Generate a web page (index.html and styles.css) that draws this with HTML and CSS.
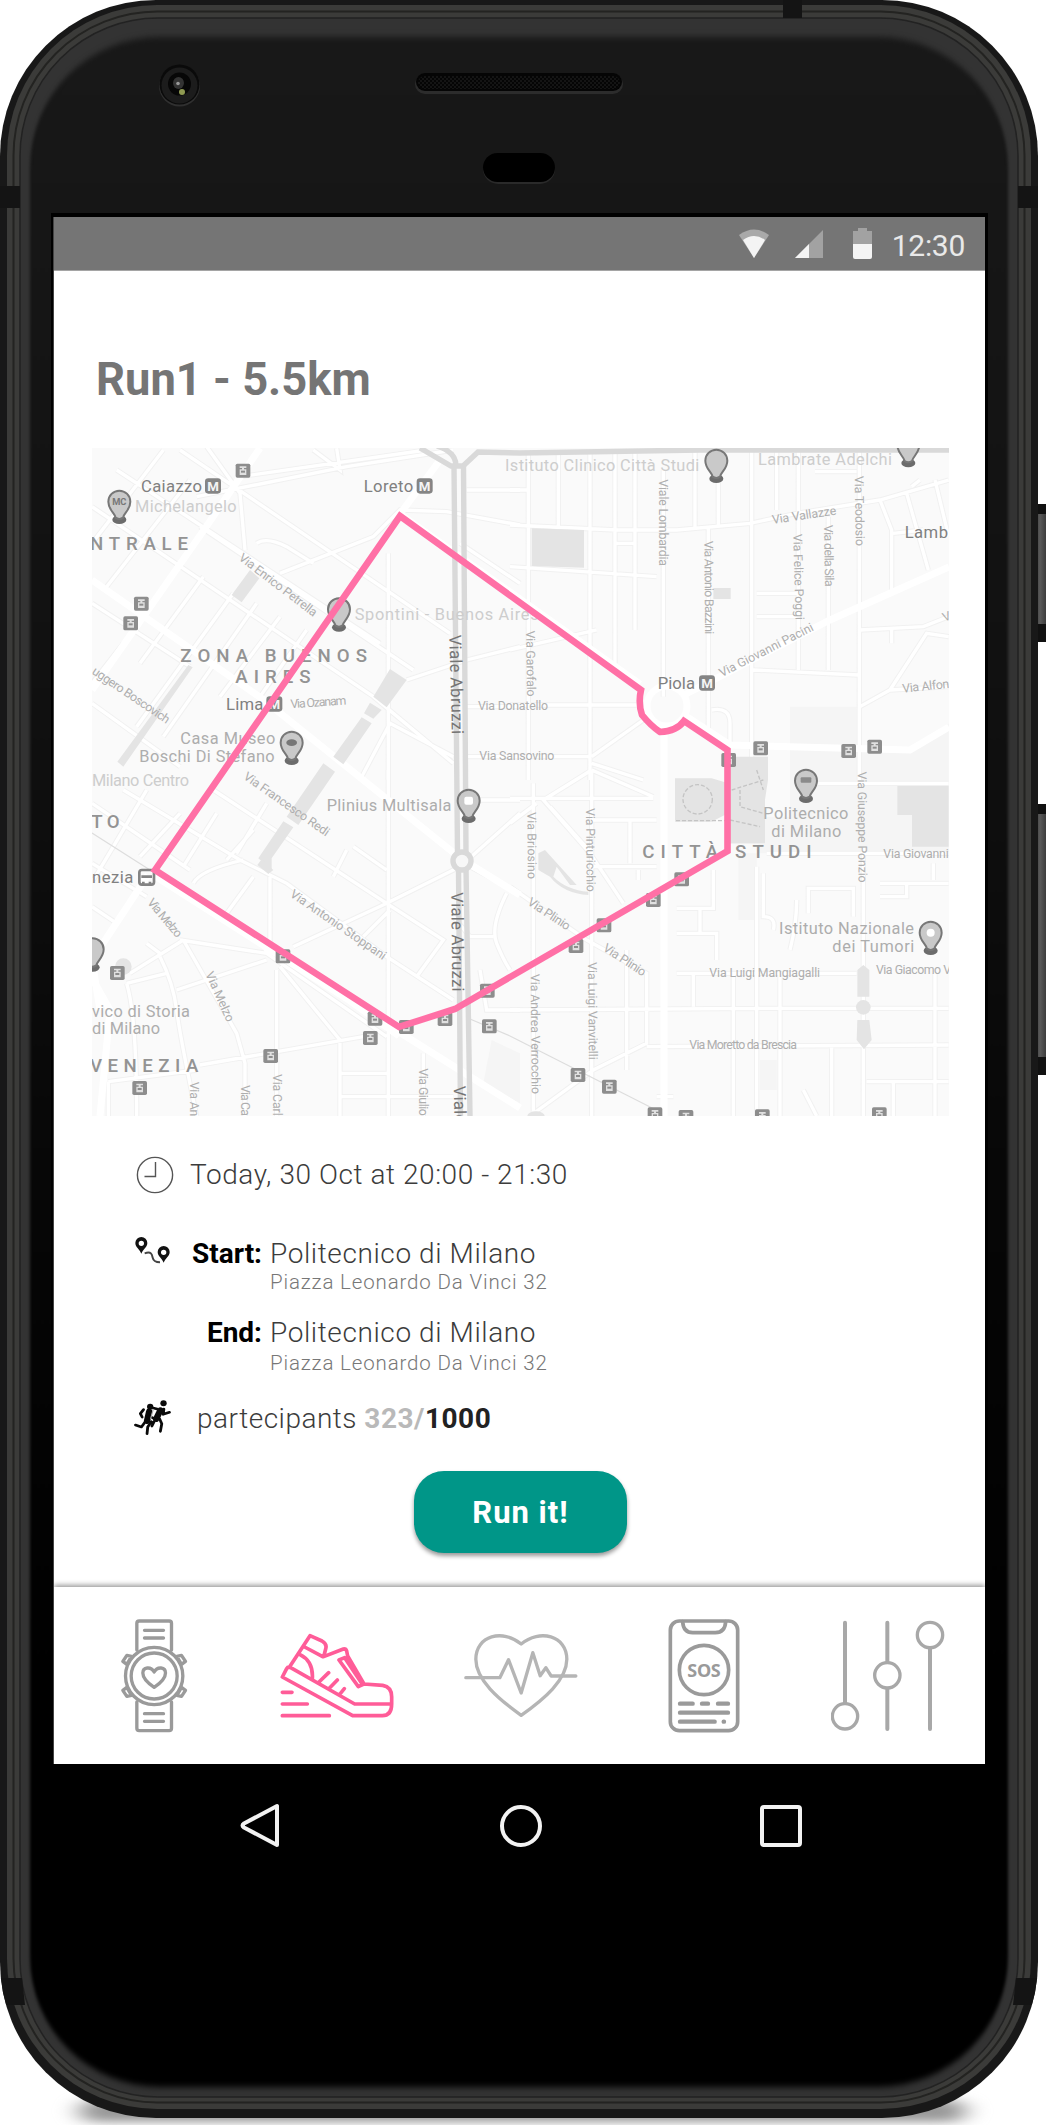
FILE: index.html
```html
<!DOCTYPE html>
<html lang="en">
<head>
<meta charset="utf-8">
<title>Run1 - 5.5km</title>
<link rel="stylesheet" href="styles.css">
</head>
<body>
<div class="phone">
  <svg class="bezel" viewBox="0 0 1046 2125" aria-hidden="true">
    <defs>
      <linearGradient id="glass" x1="0" y1="0" x2="0" y2="1"><stop offset="0" stop-color="#181818"/><stop offset=".3" stop-color="#111"/><stop offset=".6" stop-color="#050505"/><stop offset=".8" stop-color="#000"/></linearGradient>
      <linearGradient id="key" x1="0" y1="0" x2="1" y2="0"><stop offset="0" stop-color="#222"/><stop offset=".5" stop-color="#5a5a5a"/><stop offset="1" stop-color="#333"/></linearGradient>
      <pattern id="mesh" width="4" height="4" patternUnits="userSpaceOnUse"><rect width="4" height="4" fill="#050505"/><circle cx="1" cy="1" r=".8" fill="#262626"/><circle cx="3" cy="3" r=".8" fill="#262626"/></pattern>
      <filter id="soft" x="-5%" y="-5%" width="110%" height="110%" color-interpolation-filters="sRGB"><feGaussianBlur stdDeviation="1.5 3"/></filter>
      <filter id="ground" x="-10%" y="-200%" width="120%" height="500%" color-interpolation-filters="sRGB"><feGaussianBlur stdDeviation="12 5"/></filter>
      <clipPath id="body"><rect width="1038" height="2118" rx="156"/></clipPath>
    </defs>
    <rect x="80" y="2100" width="885" height="22" rx="11" fill="#999" filter="url(#ground)"/>
    <g fill="url(#key)" stroke="#111" stroke-width="2">
      <rect x="1032" y="505" width="16" height="136" rx="3"/>
      <rect x="1032" y="805" width="16" height="269" rx="3"/>
    </g>
    <path fill="#111" d="M1038 506h8v8h-8zM1038 624h8v17h-8zM1038 806h8v8h-8zM1038 1057h8v17h-8z"/>
    <rect width="1038" height="2118" rx="156" fill="#181818"/>
    <rect x="7" y="5" width="1024" height="2104" rx="150" fill="#3b3b39"/>
    <rect x="13.500" y="11.500" width="1011" height="2091" rx="144" fill="none" stroke="#232321" stroke-width="2"/>
    <rect x="20" y="18" width="998" height="2079" rx="138" fill="#333" stroke="#222" stroke-width="1.500"/>
    <rect x="30" y="37" width="978" height="2050" rx="130" fill="url(#glass)" filter="url(#soft)"/>
    <path clip-path="url(#body)" fill="#141414" d="M783 0h19v18h-19zM0 186h20v22h-20zM1018 186h20v22h-20zM0 1978h22l3 27H0zM1038 1978h-22l-3 27h25z"/>
    <circle cx="179.500" cy="86" r="20.500" fill="#303030"/>
    <circle cx="179.500" cy="84.500" r="20" fill="#0a0a0a"/>
    <circle cx="179.500" cy="85.500" r="18" fill="#1c1c1c"/>
    <circle cx="179.500" cy="84" r="11.500" fill="#070707"/>
    <ellipse cx="178.500" cy="83" rx="5.500" ry="6" fill="#333"/><circle cx="178" cy="83.500" r="1.800" fill="#999"/>
    <circle cx="182" cy="92" r="3" fill="#8f9a52"/>
    <rect x="415" y="74" width="208" height="20" rx="10" fill="#2c2c2c"/>
    <rect x="416" y="73" width="206" height="18" rx="9" fill="#050505"/>
    <rect x="418" y="76" width="202" height="13" rx="6.500" fill="url(#mesh)"/>
    <rect x="483" y="154" width="72" height="30" rx="15" fill="#2a2a2a"/>
    <rect x="483" y="153" width="72" height="29" rx="14.500" fill="#000"/>
    <rect x="51" y="213" width="937" height="1560" fill="#000"/>
  </svg>

  <main class="screen">
    <header class="status">
      <svg width="30" height="30" viewBox="0 0 30 30"><path fill="#a9a9a9" d="M0 6Q15-5 30 6L15 29z"/><path fill="#f4f4f4" d="M4 11Q15 3 26 11L15 29z"/></svg>
      <svg width="28" height="30" viewBox="0 0 28 30"><path fill="#a2a2a2" d="M28 1v28H0z"/><path fill="#f4f4f4" d="M14 15v14H0z"/></svg>
      <svg width="19" height="32" viewBox="0 0 19 32"><path fill="#a2a2a2" d="M5 0h9v3h5v14H0V3h5z"/><path fill="#f4f4f4" d="M0 16h19v13q0 2-2 2H2q-2 0-2-2z"/></svg>
      <span class="clock">12:30</span>
    </header>

    <h1 class="title">Run1 - 5.5km</h1>

    <svg class="map" viewBox="92 448 857 668" role="img" aria-label="Route map">
      <defs>
        <g id="tram"><rect x="-22" y="-21" width="44" height="42" rx="5" fill="#8d8d8d"/><path fill="#e0e0e0" d="M-10-13h20v5H3v4h7v17h-20V-4h7v-4h-7z"/><path fill="#8d8d8d" d="M-6 0h12v6H-6z"/></g>
        <g id="metro"><rect x="-24" y="-23" width="48" height="46" rx="10" fill="#858585"/><text class="m" y="14" text-anchor="middle">M</text></g>
        <g id="pin"><ellipse cy="54" rx="21" ry="13" fill="#6c6c6c"/><path fill="#c9c9c9" stroke="#777" stroke-width="6" d="M-11 48C-14 34-33 24-33 0a33 33 0 0 1 66 0C33 24 14 34 11 48Q0 56-11 48z"/></g>
        <path id="nw" d="M300 60L1110 610M110 120L900 640M700 60L780 120L770 55M36 230L880 800L1120 1000M36 520L330 710M380 50L480 190L495 360M250 60L36 340M330 150L80 470M360 290L1000 720M130 640L36 760M460 490L170 890M530 520L250 920M370 440L180 700M600 560L420 800M680 600L540 800M36 820L300 1010M350 200L800 110L1120 60M480 140L1040 60M925 370V1050M530 340Q560 320 620 350L700 400M600 430L880 320L960 240L1100 245L1320 285M1160 180H1320M980 750L1160 690L1320 650M1160 830H1320M1160 980H1320M1140 340L1320 460M840 1050L930 880L1120 980"/>
        <path id="ne" d="M55 60V1050M145 60V290M240 60V1050M315 60V700M375 60V600M460 120V800M555 60V290M625 150V290M595 290V900M725 60V1050M800 60V240M865 60V720M955 260V720M1048 60V1050M0 180H55M0 285L320 300L500 300L720 280L860 250L1110 210L1316 150M0 410L440 440M740 490H860M740 560H860M730 720L1045 735M915 125H1040M1050 600L1240 590L1316 560M1050 830L1140 780L1316 770M1140 780L1250 610L1316 620M1110 210L1145 300V490M1190 190L1255 420M1275 150L1316 320M1150 310L1240 300M0 825H380M0 980H150M140 980H245M0 660L260 600M245 980L400 870M245 1000L400 1050M605 840Q660 830 660 880V940M320 340H375V360M1145 600V640M1205 170L1230 150"/>
        <path id="sw" d="M36 100L330 300M130 60L480 270L620 340L920 560L1120 690M400 60L920 400M36 280L200 380M36 410L110 460M200 60L100 230L40 330M300 130L180 260M410 130L310 290M520 180L440 270M560 100L470 250M340 340Q360 300 490 270M570 320V560M925 0V1038M800 240L760 320M820 230L920 300M920 400L1140 290L1320 130M640 530L920 400L1090 510L1010 620M1170 290L1320 370M1280 370Q1230 470 1250 520T1290 600M1170 500H1240M1160 90H1320M300 510L560 550L920 800M310 510L470 790L495 880V1038M240 560Q280 640 290 720T350 1038M150 610L310 510M140 640L260 610M290 660L560 570M600 590L780 810V1038M360 885L850 800M85 935L350 900M85 935V1038M140 640Q170 740 170 1038M590 600V1038M780 910H920M780 980H920M920 980H1120M1030 850V1038M1200 600L1220 720H1320M200 520L240 550M440 430L520 320M850 500L930 420M1120 440L1170 500"/>
        <path id="se" d="M70 40V1038M0 85H430M245 0L100 90L240 250L340 400M245 0L430 80M120 110L245 250M245 0V1038M0 160L80 100M360 150V280M250 150H440M250 290H440M385 300V330M0 350L230 510L410 610V820L250 900L60 1038M0 720L740 715H1316M500 610H1040M550 610V710M670 610V1038M740 290V1038M810 610V1038M410 830L1316 825M1275 610V1038M1060 230V1038M1070 935H1316M965 830V1038M1150 940V1038M500 490H620V570M500 415H610V300M570 420V490M760 310V440Q800 440 790 480M840 540Q860 460 860 390M895 430V355H1030V440M1110 340H1316M1110 380H1190V340M1270 280V330M770 250H1316M900 40H1316M350 540V900M440 980H490M880 960L920 1038"/>
      </defs>
      <rect x="92" y="448" width="857" height="668" fill="#fafafa"/>
      <g class="park back">
        <g transform="translate(510 430) scale(.33333)"><path d="M840 830H1040V950H1210L1316 880V1270H745V1160H840z"/></g>
        <g transform="translate(80 770) scale(.33333)"><path d="M1235 810L1320 850V1000L1210 940z"/></g>
        <g transform="translate(510 770) scale(.33333)"><path d="M685 250H740V450H685zM750 870H800V960H750z"/></g>
      </g>
      <g class="roads casing">
        <use href="#nw" transform="translate(80 430) scale(.33333)"/><use href="#ne" transform="translate(510 430) scale(.33333)"/><use href="#sw" transform="translate(80 770) scale(.33333)"/><use href="#se" transform="translate(510 770) scale(.33333)"/>
      </g>
      <g class="roads surface">
        <use href="#nw" transform="translate(80 430) scale(.33333)"/><use href="#ne" transform="translate(510 430) scale(.33333)"/><use href="#sw" transform="translate(80 770) scale(.33333)"/><use href="#se" transform="translate(510 770) scale(.33333)"/>
      </g>
      <g class="avenue">
        <path d="M92 580L264 700L460 858L520 895M260 448L206 527L92 690M440 460L400 514L640 684M684 715L730 745L910 750L949 727M684 695L830 620L949 567M664 730V1116M148 875L92 960L100 1010M155 876L399 1032L520 1108M265 948L300 965L399 1036M92 978L110 1010L100 1116"/>
        <circle cx="667" cy="706" r="20"/>
      </g>
      <g class="park">
        <g transform="translate(80 430) scale(.33333)"><path d="M510 420L538 445L485 517L455 495zM325 705L338 712L130 1010L112 995zM930 717L980 750L920 832L880 800zM870 818L905 840L880 866L852 850zM845 862L875 880L790 1003L760 980zM730 1000L765 1025L655 1185L620 1160zM640 1192L610 1174L535 1285L575 1320L575 1285z"/></g>
        <g transform="translate(510 430) scale(.33333)"><path d="M65 295L222 300V413L65 408zM610 474H662V507H610z"/><path d="M660 980H774V1050L745 1240H660z"/></g>
        <g transform="translate(80 770) scale(.33333)"><path d="M545 268L580 300L565 312L532 285z"/><circle cx="130" cy="590" r="25"/></g>
        <g transform="translate(510 770) scale(.33333)"><path d="M495 25H605L650 38V132L605 155H495zM660 0H765V220H660zM1162 48H1316V230H1206V135H1162zM85 250L105 240L200 345H180L140 290L130 320Q170 360 235 365V375Q160 370 120 320L85 300zM1042 600L1060 585L1078 600V680H1042zM1042 750H1078L1085 810L1062 838L1040 810z"/><circle cx="1060" cy="712" r="22"/><ellipse cx="78" cy="1038" rx="26" ry="14"/></g>
      </g>
      <path class="rail" d="M92 833L150 870M470 1019L510 1036L660 1112"/>
      <g transform="translate(510 770) scale(.33333)" class="paths"><circle cx="563" cy="88" r="44"/><path d="M498 152H650M665 60L760 30M660 150L750 170M690 60V110L760 130M740 0L760 60"/></g>
      <g class="trunk">
        <path d="M420 448L451 466H463L478 452L520 453L700 450H949M437 446Q456 452 456 466"/>
        <path d="M454 465L457.500 854M463.500 465L466 854M458.500 868L460.500 1116M466 868L470 1116"/>
        <circle cx="462" cy="861" r="9" fill="#f7f7f7"/>
      </g>

      <g transform="translate(80 430) scale(.33333)">
        <use href="#pin" x="118" y="215"/><text class="tiny" x="97" y="225" textLength="42">MC</text>
        <use href="#pin" x="777" y="538"/><use href="#pin" x="635" y="938"/><ellipse cx="635" cy="938" rx="16" ry="10" fill="#777"/>
        <use href="#tram" x="489" y="122"/><use href="#tram" x="184" y="521"/><use href="#tram" x="152" y="580"/>
        <use href="#metro" x="399" y="168"/><use href="#metro" x="1034" y="168"/><use href="#metro" x="583" y="822"/>
        <g class="stop"><text x="183" y="186" textLength="183">Caiazzo</text><text x="851" y="186" textLength="149">Loreto</text><text x="438" y="839" textLength="112">Lima</text></g>
        <g class="place"><text class="faint" x="165" y="246" textLength="305">Michelangelo</text><text class="faint" x="824" y="571" textLength="552">Spontini - Buenos Aires</text><text x="301" y="943" textLength="285">Casa Museo</text><text x="178" y="995" textLength="406">Boschi Di Stefano</text><text class="faint" x="36" y="1067" textLength="291">Milano Centro</text></g>
        <g class="zone"><text x="30" y="360" textLength="294">NTRALE</text><text x="301" y="697" textLength="560">ZONA BUENOS</text><text x="466" y="758" textLength="226">AIRES</text></g>
        <g class="street"><text transform="translate(474 388) rotate(37.500)" textLength="285">Via Enrico Petrella</text><text transform="translate(34 730) rotate(34)" textLength="272">uggero Boscovich</text><text transform="translate(632 835) rotate(-4)" textLength="168">Via Ozanam</text><text x="1194" y="840" textLength="210">Via Donatello</text><text x="1198" y="990" textLength="225">Via Sansovino</text></g>
        <g class="major"><text transform="translate(1108 615) rotate(88.500)" textLength="298">Viale Abruzzi</text></g>
      </g>
      <g transform="translate(510 430) scale(.33333)">
        <use href="#pin" x="619" y="92"/><use href="#pin" x="1195" y="45"/>
        <use href="#tram" x="752" y="955"/><use href="#tram" x="1016" y="963"/><use href="#tram" x="1094" y="950"/><use href="#tram" x="656" y="990"/><use href="#metro" x="591" y="759"/>
        <g class="stop"><text x="443" y="776" textLength="112">Piola</text><text x="1184" y="325" textLength="130">Lamb</text></g>
        <g class="place faint"><text x="-15" y="122" textLength="583">Istituto Clinico Città Studi</text><text x="744" y="104" textLength="402">Lambrate Adelchi</text></g>
        <g class="street"><text transform="translate(446 148) rotate(90)" textLength="260">Viale Lombardia</text><text transform="translate(583 333) rotate(89.500)" textLength="280">Via Antonio Bazzini</text><text transform="translate(850 312) rotate(88.500)" textLength="258">Via Felice Poggi</text><text transform="translate(942 285) rotate(89)" textLength="185">Via della Sila</text><text transform="translate(1034 138) rotate(89)" textLength="210">Via Teodosio</text><text transform="translate(48 602) rotate(89)" textLength="198">Via Garofalo</text><text transform="translate(788 282) rotate(-8.500)" textLength="194">Via Vallazze</text><text transform="translate(635 742) rotate(-27)" textLength="312">Via Giovanni Pacini</text><text transform="translate(1178 788) rotate(-6)" textLength="180">Via Alfonso</text><text transform="translate(1303 575) rotate(-20)">Via</text></g>
      </g>
      <g transform="translate(80 770) scale(.33333)">
        <use href="#pin" x="1166" y="92"/><rect x="1153" y="80" width="26" height="24" rx="6" fill="#fff"/><use href="#pin" x="38" y="538"/>
        <use href="#tram" x="112" y="609"/><use href="#tram" x="179" y="954"/><use href="#tram" x="572" y="858"/><use href="#tram" x="609" y="559"/><use href="#tram" x="885" y="746"/><use href="#tram" x="871" y="804"/><use href="#tram" x="979" y="771"/><use href="#tram" x="1095" y="747"/><use href="#tram" x="1228" y="769"/><use href="#tram" x="1222" y="662"/>
        <g fill="none" stroke="#848484" stroke-width="8"><rect x="178" y="300" width="44" height="44" rx="8"/><path d="M184 320H216M190 335V345M210 335V345"/></g>
        <g class="stop"><text x="36" y="340" textLength="124">nezia</text></g>
        <g class="place"><text x="740" y="123" textLength="374">Plinius Multisala</text><text x="36" y="740" textLength="294">vico di Storia</text><text x="36" y="792" textLength="204">di Milano</text></g>
        <g class="zone"><text x="34" y="175" textLength="85">TO</text><text x="30" y="905" textLength="325">VENEZIA</text></g>
        <g class="street"><text transform="translate(488 25) rotate(35)" textLength="305">Via Francesco Redi</text><text transform="translate(628 378) rotate(34.500)" textLength="340">Via Antonio Stoppani</text><text transform="translate(200 398) rotate(50)" textLength="140">Via Melzo</text><text transform="translate(376 612) rotate(66)" textLength="160">Via Melzo</text><text transform="translate(331 935) rotate(90)" textLength="104">Via An</text><text transform="translate(484 945) rotate(90)" textLength="93">Via Ca</text><text transform="translate(578 912) rotate(90)" textLength="125">Via Carl</text><text transform="translate(1018 895) rotate(90)" textLength="142">Via Giulio</text></g>
        <g class="major"><text transform="translate(1114 367) rotate(89.500)" textLength="298">Viale Abruzzi</text><text transform="translate(1121 948) rotate(88.500)" textLength="112">Viale</text></g>
      </g>
      <g transform="translate(510 770) scale(.33333)">
        <use href="#pin" x="888" y="32"/><rect x="872" y="22" width="32" height="16" rx="3" fill="#8a8a8a"/><use href="#pin" x="1262" y="488"/><circle cx="1262" cy="488" r="12" fill="#fff"/>
        <use href="#tram" x="515" y="328"/><use href="#tram" x="430" y="390"/><use href="#tram" x="282" y="466"/><use href="#tram" x="198" y="528"/><use href="#tram" x="204" y="915"/><use href="#tram" x="298" y="950"/><use href="#tram" x="435" y="1033"/><use href="#tram" x="528" y="1041"/><use href="#tram" x="757" y="1039"/><use href="#tram" x="1108" y="1033"/>
        <g class="place"><text x="760" y="148" textLength="255">Politecnico</text><text x="784" y="200" textLength="210">di Milano</text><text x="807" y="493" textLength="405">Istituto Nazionale</text><text x="967" y="545" textLength="246">dei Tumori</text></g>
        <g class="zone"><text x="397" y="265" textLength="508">CITTÀ STUDI</text></g>
        <g class="street"><text transform="translate(52 127) rotate(89.500)" textLength="200">Via Briosino</text><text transform="translate(228 115) rotate(89.500)" textLength="250">Via Pinturicchio</text><text transform="translate(50 402) rotate(33.500)" textLength="145">Via Plinio</text><text transform="translate(277 540) rotate(33.500)" textLength="145">Via Plinio</text><text transform="translate(1043 5) rotate(89.500)" textLength="333">Via Giuseppe Ponzio</text><text transform="translate(234 577) rotate(89.500)" textLength="292">Via Luigi Vanvitelli</text><text transform="translate(62 612) rotate(89.500)" textLength="360">Via Andrea Verrocchio</text><text x="1120" y="265" textLength="196">Via Giovanni</text><text x="598" y="620" textLength="332">Via Luigi Mangiagalli</text><text x="1098" y="613" textLength="225">Via Giacomo V</text><text x="538" y="836" textLength="323">Via Moretto da Brescia</text></g>
      </g>
      <path class="route" d="M727.500 851V750L684 721Q677 731 660 732Q651 726 642 715Q638 703 641 690L400 516L155 870L399 1027L455 1009z"/>
    </svg>

    <section class="details">
      <div class="row when">
        <svg class="icon" width="38" height="38" viewBox="0 0 38 38"><g fill="none" stroke="#555" stroke-width="1.400"><circle cx="19" cy="19" r="17.600"/><path d="M19.500 6V20.500H8.500"/></g></svg>
        <span class="when-text">Today, 30 Oct at 20:00 - 21:30</span>
      </div>
      <div class="row start">
        <svg class="icon" width="38" height="30" viewBox="150 316 114 90" preserveAspectRatio="none"><path fill="#111" fill-rule="evenodd" d="M172 322a18 18 0 0 1 18 18c0 12-12 18-18 32c-6-14-18-20-18-32a18 18 0 0 1 18-18zM172 333a8 8 0 1 0 0 16a8 8 0 1 0 0-16zM239 349a18 18 0 0 1 18 18c0 12-12 18-18 32c-6-14-18-20-18-32a18 18 0 0 1 18-18zM239 360a8 8 0 1 0 0 16a8 8 0 1 0 0-16z"/><path d="M182 371C202 364 204 374 206 384S216 398 228 398" fill="none" stroke="#444" stroke-width="6"/></svg>
        <b class="label">Start:</b><div><div class="place-name">Politecnico di Milano</div><div class="address">Piazza Leonardo Da Vinci 32</div></div>
      </div>
      <div class="row end">
        <span class="icon"></span>
        <b class="label">End:</b><div><div class="place-name">Politecnico di Milano</div><div class="address">Piazza Leonardo Da Vinci 32</div></div>
      </div>
      <div class="row people">
        <svg class="icon" width="40" height="38" viewBox="150 812 114 114" preserveAspectRatio="none"><g fill="none" stroke="#0a0a0a" stroke-linecap="round" stroke-linejoin="round"><path stroke-width="8" d="M219 842L204 838M238 842L236 858L254 852M226 872L232 886L228 909M180 844L171 856L176 866M202 880L192 896L190 916M184 882L174 896L157 890M205 868L216 874L224 862M210 880L204 893"/><path stroke-width="18" d="M228 846L216 872M196 850L190 878"/></g><circle cx="237" cy="825" r="9" fill="#0a0a0a"/><circle cx="199" cy="835" r="9" fill="#0a0a0a"/><path d="M208 842L200 872" stroke="#aaa" stroke-width="3"/></svg>
        <span class="people-text">partecipants <b class="joined">323/</b><b class="limit">1000</b></span>
      </div>
      <button class="run">Run it!</button>
    </section>

    <nav class="tabs">
      <svg viewBox="139.500 147 342 342"><g fill="none" stroke="#9a9a9a" stroke-width="10" stroke-linecap="round" stroke-linejoin="round"><path d="M259 240V160Q259 153 266 153H356Q363 153 363 160V240M259 396V475Q259 482 266 482H356Q363 482 363 475V396M282 181H339M282 204H339M282 431H339M282 454H339"/><circle cx="311" cy="318" r="86"/><circle cx="311" cy="318" r="69"/><path d="M311 352C290 338 277 322 277 309C277 291 301 288 311 306C321 288 345 291 345 309C345 322 332 338 311 352zM217 274L229 256L243 259L229 283zM405 274L393 256L379 259L393 283zM217 361L229 379L243 376L229 352zM405 361L393 379L379 376L393 352z"/></g></svg>
      <svg viewBox="690 147 342 342"><g fill="none" stroke="#ff5c98" stroke-width="11" stroke-linecap="round" stroke-linejoin="round"><path d="M718 292L780 197L816 213Q832 222 827 237L821 260L880 237Q888 236 890 243L893 258L942 342L998 346Q1025 351 1025 380V402Q1025 437 997 437H908L697 321L710 296Q714 289 722 293L914 402H1024M764 231L818 260M750 254Q791 274 787 327M867 270L884 263L938 344L925 350zM807 336L836 308M838 355L862 330M869 373L883 356M697 367H726M697 402H772M697 437H838"/></g></svg>
      <svg viewBox="1240.500 147 342 342"><g fill="none" stroke="#b5b5b5" stroke-width="10" stroke-linecap="round" stroke-linejoin="round"><path d="M1412 436C1345 388 1276 330 1276 268C1276 196 1357 176 1412 222C1467 176 1549 196 1549 268C1549 330 1480 388 1412 436z"/><path d="M1246 323H1348L1374 269L1412 369L1447 248L1469 317L1486 293L1502 318H1576"/></g></svg>
      <svg viewBox="321 147 342 342"><g fill="none" stroke="#9a9a9a" stroke-width="11" stroke-linecap="round" stroke-linejoin="round"><rect x="391" y="153" width="202" height="329" rx="27"/><path d="M428 155Q430 188 458 188H526Q555 188 557 155"/><circle cx="492" cy="300" r="74"/><path stroke-width="13" d="M420 401H458M486 401H504M534 401H564M420 428H564M420 455H524M551 455H552"/></g><text class="sos" x="442" y="321" textLength="100">SOS</text></svg>
      <svg viewBox="873 147 342 342"><g fill="none" stroke="#a8a8a8" stroke-width="10" stroke-linecap="round"><path stroke-width="12" d="M915 158V398M1042 158V276M1042 356V477M1170 236V477"/><circle cx="915" cy="439" r="38"/><circle cx="1042" cy="316" r="38"/><circle cx="1170" cy="195" r="38"/></g></svg>
    </nav>

    <footer class="system">
      <svg viewBox="0 0 48 48"><path d="M41 4V43L8 25.500Q5 23.500 8 21.500z"/></svg>
      <svg viewBox="0 0 48 48"><circle cx="24" cy="24" r="19"/></svg>
      <svg viewBox="0 0 48 48"><rect x="5" y="5" width="38" height="38" rx="2"/></svg>
    </footer>
  </main>
</div>
</body>
</html>
```
FILE: styles.css
```css
* { box-sizing: border-box; }
body { margin: 0; background: #fff; font-family: Roboto, "Liberation Sans", sans-serif; }
svg { display: block; }
.phone { position: relative; width: 1046px; height: 2125px; padding: 217px 61px 0 53px; overflow: hidden; }
.bezel { position: absolute; left: 0; top: 0; width: 1046px; height: 2125px; }
.screen { position: relative; display: flex; flex-direction: column; width: 932px; height: 1663px; border-left: 1px solid #444; background: #fff; }

.status { display: flex; align-items: center; justify-content: flex-end; height: 54px; padding-right: 20px; background: #757575; border-bottom: 1px solid #a5a5a5; }
.status svg:nth-child(1) { margin-right: 26px; }
.status svg:nth-child(2) { margin-right: 30px; }
.status svg:nth-child(3) { margin-right: 20px; }
.clock { padding-top: 3px; color: #e9e9e9; font-size: 30px; line-height: 51px; letter-spacing: -.3px; }

.title { margin: 83px 0 42px 42px; color: #757575; font-size: 45.3px; font-weight: 700; line-height: 52px; }

.map { width: 857px; height: 668px; margin-left: 38px; flex: none; }
.park { fill: #e4e4e4; }
.back { fill: #f5f5f5; }
.roads, .avenue, .rail, .paths { fill: none; }
.casing { stroke: #f1f1f1; stroke-width: 16; }
.surface { stroke: #fff; stroke-width: 10; }
.avenue { stroke: #fff; stroke-width: 7; }
.rail { stroke: #ddd; stroke-width: 1.2; }
.paths { stroke: #c4c4c4; stroke-width: 4; stroke-dasharray: 12 6; }
.trunk { fill: none; stroke: #d9d9d9; stroke-width: 5.4; }
.route { fill: none; stroke: #ff70a6; stroke-width: 6.6; }
.m { fill: #f4f4f4; font-size: 40px; font-weight: 700; }
.tiny { fill: #777; font-size: 28px; font-weight: 700; }
.stop { fill: #808080; font-size: 50px; }
.place { fill: #adadad; font-size: 49px; }
.faint { fill: #cdcdcd; }
.zone { fill: #939393; font-size: 56px; font-weight: 500; }
.street { fill: #aeaeae; font-size: 37px; }
.major { fill: #757575; font-size: 50px; }

.details { display: flex; flex-direction: column; height: 471px; padding-left: 83px; color: #3c3c3c; font-size: 28px; font-weight: 300; line-height: 32px; }
.row { display: flex; align-items: flex-start; flex: none; }
.icon { flex: none; }
.when { height: 32px; margin-top: 43px; }
.when .icon { margin: -3px 16px 0 -1px; }
.when-text { letter-spacing: .56px; }
.start { height: 56px; margin-top: 47px; }
.start .icon { margin: -3px 0 0 -3px; }
.end { height: 58px; margin-top: 23px; }
.end .icon { width: 35px; }
.label { width: 90px; margin-right: 8px; color: #000; font-size: 28px; font-weight: 700; text-align: right; }
.place-name { letter-spacing: .6px; }
.address { color: #777; font-size: 20.5px; line-height: 24px; letter-spacing: .85px; }
.end .address { margin-top: 2px; }
.people { height: 32px; margin-top: 28px; }
.people .icon { margin: -4px 24px 0 -4px; }
.people-text { letter-spacing: .5px; }
.people-text b { font-weight: 700; }
.joined { color: #b9b9b9; }
.limit { color: #222; }
.run { flex: none; width: 213px; height: 82px; margin: 36px 0 0 277px; border: 0; border-radius: 30px; background: #009688; box-shadow: 0 3px 4px rgba(0, 0, 0, .4); color: #fff; font: 700 31px/82px Roboto, sans-serif; letter-spacing: 1px; }

.tabs { position: relative; display: flex; justify-content: space-between; height: 177px; padding: 32px 40px 0 42.5px; background: #fff; box-shadow: 0 -2px 5px rgba(0, 0, 0, .4); clip-path: inset(-12px 0 0 0); }
.tabs svg { width: 114px; height: 114px; }
.sos { fill: #9a9a9a; font-family: "Noto Sans", sans-serif; font-size: 54px; font-weight: 700; }

.system { display: flex; justify-content: space-between; height: 116px; margin-left: -1px; padding: 38px 180px 0 183px; background: #000; }
.system svg { width: 48px; height: 48px; fill: none; stroke: #f2f2f2; stroke-width: 4; stroke-linejoin: round; }
```
